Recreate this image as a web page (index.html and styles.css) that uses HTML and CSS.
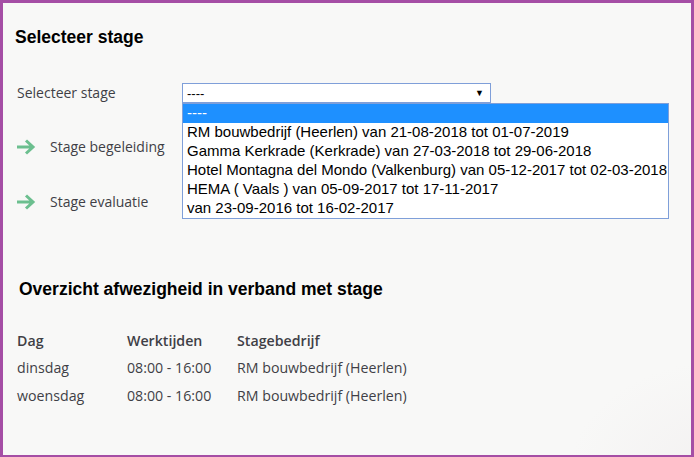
FILE: index.html
```html
<!DOCTYPE html>
<html>
<head>
<meta charset="utf-8">
<link rel="stylesheet" href="styles.css">
</head>
<body>
<div class="frame">
  <h1 class="title">Selecteer stage</h1>
  <div class="select-row">
    <span class="label">Selecteer stage</span>
    <div class="select-wrap">
      <div class="select"><span>----</span><span class="caret">▼</span></div>
      <ul class="options">
        <li class="active">----</li>
        <li>RM bouwbedrijf (Heerlen) van 21-08-2018 tot 01-07-2019</li>
        <li>Gamma Kerkrade (Kerkrade) van 27-03-2018 tot 29-06-2018</li>
        <li>Hotel Montagna del Mondo (Valkenburg) van 05-12-2017 tot 02-03-2018</li>
        <li>HEMA ( Vaals ) van 05-09-2017 tot 17-11-2017</li>
        <li>van 23-09-2016 tot 16-02-2017</li>
      </ul>
    </div>
  </div>
  <div class="links">
    <div class="link">
      <svg class="arrow" width="20" height="16" viewBox="0 0 20 16"><path d="M1 8H17M10 1.5L17 8L10 14.5" fill="none" stroke="#6cbf8f" stroke-width="3"/></svg>
      <span>Stage begeleiding</span>
    </div>
    <div class="link">
      <svg class="arrow" width="20" height="16" viewBox="0 0 20 16"><path d="M1 8H17M10 1.5L17 8L10 14.5" fill="none" stroke="#6cbf8f" stroke-width="3"/></svg>
      <span>Stage evaluatie</span>
    </div>
  </div>
  <h2 class="subtitle">Overzicht afwezigheid in verband met stage</h2>
  <table class="table">
    <thead>
      <tr><th>Dag</th><th>Werktijden</th><th>Stagebedrijf</th></tr>
    </thead>
    <tbody>
      <tr><td>dinsdag</td><td>08:00 - 16:00</td><td>RM bouwbedrijf (Heerlen)</td></tr>
      <tr><td>woensdag</td><td>08:00 - 16:00</td><td>RM bouwbedrijf (Heerlen)</td></tr>
    </tbody>
  </table>
</div>
</body>
</html>
```

FILE: styles.css
```css
html, body {
  margin: 0;
  padding: 0;
}
body {
  width: 694px;
  height: 457px;
  overflow: hidden;
}
.frame {
  box-sizing: border-box;
  width: 694px;
  height: 457px;
  border: 3px solid #a54ea5;
  border-bottom-width: 2px;
  background: radial-gradient(ellipse 220px 160px at 720px 470px, #f3f1f1 0%, #f8f8f7 70%), #f8f8f7;
  padding: 0 0 0 12px;
  font-family: "Open Sans", sans-serif;
  color: #3f3f46;
}
.title {
  font-family: "Liberation Sans", Arial, sans-serif;
  font-size: 17.5px;
  font-weight: bold;
  color: #000;
  margin: 0;
  padding-top: 24px;
  line-height: 20px;
}
.select-row {
  display: flex;
  align-items: flex-start;
  margin-top: 36px;
}
.label {
  font-size: 14px;
  line-height: 20px;
  width: 165px;
  padding-left: 2px;
}
.select-wrap {
  position: relative;
}
.select {
  box-sizing: border-box;
  width: 309px;
  height: 20px;
  border: 1px solid #7f9fd9;
  background: #fff;
  display: flex;
  justify-content: space-between;
  align-items: center;
  padding: 0 6px 0 4px;
  font-family: "Liberation Sans", Arial, sans-serif;
  font-size: 13px;
  color: #000;
}
.caret {
  font-size: 9px;
}
.options {
  position: absolute;
  left: 0;
  top: 20px;
  margin: 0;
  padding: 0;
  list-style: none;
  box-sizing: border-box;
  width: 487px;
  background: #fff;
  border: 1px solid #7f9fd9;
  font-family: "Liberation Sans", Arial, sans-serif;
  font-size: 15px;
  color: #000;
  z-index: 2;
}
.options li {
  height: 19px;
  line-height: 18px;
  padding-left: 4px;
  white-space: nowrap;
}
.options li.active {
  background: #1e90ff;
  color: #fff;
}
.links {
  display: flex;
  flex-direction: column;
  gap: 35px;
  margin-top: 34px;
}
.link {
  display: flex;
  align-items: center;
  gap: 14px;
  font-size: 14px;
  line-height: 20px;
  padding-left: 2px;
}
.arrow {
  display: block;
  margin-left: -1px;
}
.subtitle {
  font-family: "Liberation Sans", Arial, sans-serif;
  font-size: 17.5px;
  font-weight: bold;
  color: #000;
  margin: 67px 0 0 4px;
  line-height: 20px;
}
.table {
  border-collapse: collapse;
  margin-top: 28px;
  margin-left: 2px;
  font-size: 14.2px;
  color: #3f3f46;
}
.table th {
  text-align: left;
  font-weight: 600;
  padding: 0;
  height: 27px;
  line-height: 20px;
  vertical-align: middle;
}
.table td {
  padding: 0;
  height: 28px;
  line-height: 20px;
  vertical-align: middle;
}
.table th:nth-child(1), .table td:nth-child(1) { width: 110px; }
.table th:nth-child(2), .table td:nth-child(2) { width: 110px; }
```
